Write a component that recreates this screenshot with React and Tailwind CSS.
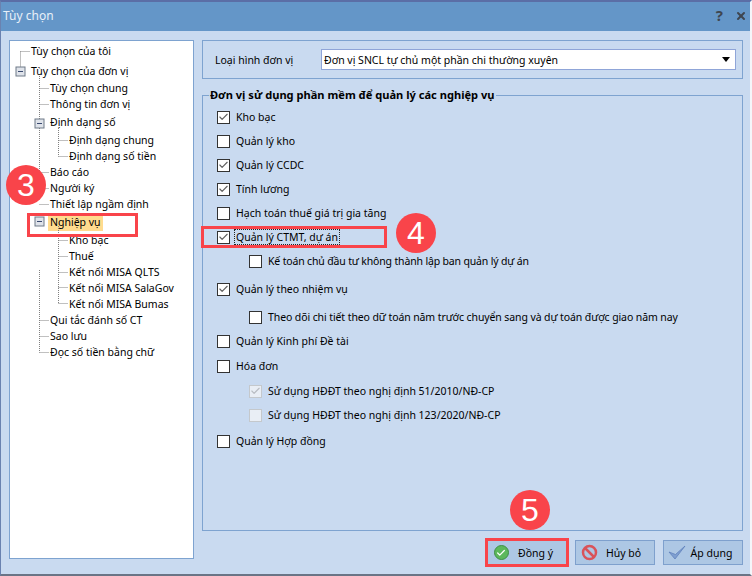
import { Check, X } from 'lucide-react'

// Cây tùy chọn bên trái: level quyết định thụt lề, gap là khoảng đệm phía trên dòng
const treeItems = [
  { label: 'Tùy chọn của tôi', indent: 'ml-[21px]', gap: 'mt-0' },
  { label: 'Tùy chọn của đơn vị', indent: 'ml-[21px]', gap: 'mt-[4px]' },
  { label: 'Tùy chọn chung', indent: 'ml-[40px]', gap: 'mt-[1px]' },
  { label: 'Thông tin đơn vị', indent: 'ml-[40px]', gap: 'mt-0' },
  { label: 'Định dạng số', indent: 'ml-[40px]', gap: 'mt-[2px]' },
  { label: 'Định dạng chung', indent: 'ml-[59px]', gap: 'mt-[2px]' },
  { label: 'Định dạng số tiền', indent: 'ml-[59px]', gap: 'mt-0' },
  { label: 'Báo cáo', indent: 'ml-[40px]', gap: 'mt-0' },
  { label: 'Người ký', indent: 'ml-[40px]', gap: 'mt-0' },
  { label: 'Thiết lập ngầm định', indent: 'ml-[40px]', gap: 'mt-0' },
  { label: 'Nghiệp vụ', indent: 'ml-[40px]', gap: 'mt-[2px]', selected: true },
  { label: 'Kho bạc', indent: 'ml-[59px]', gap: 'mt-[2px]' },
  { label: 'Thuế', indent: 'ml-[59px]', gap: 'mt-0' },
  { label: 'Kết nối MISA QLTS', indent: 'ml-[59px]', gap: 'mt-0' },
  { label: 'Kết nối MISA SalaGov', indent: 'ml-[59px]', gap: 'mt-0' },
  { label: 'Kết nối MISA Bumas', indent: 'ml-[59px]', gap: 'mt-0' },
  { label: 'Qui tắc đánh số CT', indent: 'ml-[40px]', gap: 'mt-0' },
  { label: 'Sao lưu', indent: 'ml-[40px]', gap: 'mt-0' },
  { label: 'Đọc số tiền bằng chữ', indent: 'ml-[40px]', gap: 'mt-0' },
]

// Danh sách nghiệp vụ ở khung bên phải
const options = [
  { label: 'Kho bạc', checked: true, gap: 'mt-0' },
  { label: 'Quản lý kho', gap: 'mt-[10px]' },
  { label: 'Quản lý CCDC', checked: true, gap: 'mt-[10px]' },
  { label: 'Tính lương', checked: true, gap: 'mt-[10px]' },
  { label: 'Hạch toán thuế giá trị gia tăng', gap: 'mt-[10px]' },
  { label: 'Quản lý CTMT, dự án', checked: true, gap: 'mt-[10px]', focused: true },
  { label: 'Kế toán chủ đầu tư không thành lập ban quản lý dự án', sub: true, gap: 'mt-[10px]', tracking: 'tracking-[-0.16px]' },
  { label: 'Quản lý theo nhiệm vụ', checked: true, gap: 'mt-[14px]' },
  { label: 'Theo dõi chi tiết theo dữ toán năm trước chuyển sang và dự toán được giao năm nay', sub: true, gap: 'mt-[14px]', tracking: 'tracking-[-0.1px]' },
  { label: 'Quản lý Kinh phí Đề tài', gap: 'mt-[10px]' },
  { label: 'Hóa đơn', gap: 'mt-[11px]' },
  { label: 'Sử dụng HĐĐT theo nghị định 51/2010/NĐ-CP', checked: true, sub: true, disabled: true, gap: 'mt-[11px]' },
  { label: 'Sử dụng HĐĐT theo nghị định 123/2020/NĐ-CP', sub: true, disabled: true, gap: 'mt-[10px]' },
  { label: 'Quản lý Hợp đồng', gap: 'mt-[12px]' },
]

// Nét chấm của cây và các ô thu gọn, vẽ đè lên khung cây
const TreeLines = () => (
  <svg className="absolute left-0 top-0 pointer-events-none" width="184" height="330" viewBox="0 0 184 330" fill="none">
    <g stroke="#808080" strokeDasharray="1 1">
      <path d="M10.5 10.5H20M10.5 10.5V26" />
      <path d="M29.5 35V155M29.5 47.5H39M29.5 63.5H39M29.5 131.5H39M29.5 147.5H39M29.5 163.5H39M29.5 229V311.5M29.5 279.5H39M29.5 295.5H39M29.5 311.5H39" />
      <path d="M48.5 87V115.5M48.5 99.5H58M48.5 115.5H58" />
      <path d="M48.5 185V262.5M48.5 199.5H58M48.5 215.5H58M48.5 231.5H58M48.5 246.5H58M48.5 262.5H58" />
    </g>
    <g>
      <rect x="6" y="26" width="9" height="9" fill="#dfe3ea" stroke="#6f7a88" />
      <path d="M8 30.5H13" stroke="#3a4a70" />
      <rect x="25" y="78" width="9" height="9" fill="#dfe3ea" stroke="#6f7a88" />
      <path d="M27 82.5H32" stroke="#3a4a70" />
      <rect x="25" y="176" width="9" height="9" fill="#dfe3ea" stroke="#6f7a88" />
      <path d="M27 180.5H32" stroke="#3a4a70" />
    </g>
  </svg>
)

const OptionRow = ({ item }) => (
  <div className={`flex items-center h-[14px] ${item.gap} ${item.sub ? 'ml-[32px]' : 'ml-0'}`}>
    <span
      className={`w-[13px] h-[13px] flex items-center justify-center border shrink-0 ${
        item.disabled ? 'border-[#c4c8cc] bg-[#e9eef5]' : 'border-[#333333] bg-white'
      }`}
    >
      {item.checked && (
        <Check size={12} strokeWidth={2.5} className={item.disabled ? 'text-[#b8bcc2]' : 'text-[#606060]'} />
      )}
    </span>
    <span className={`ml-[5px] px-[1px] whitespace-nowrap ${item.tracking || ''} ${item.focused ? 'outline outline-1 outline-dotted outline-[#222222]' : ''}`}>
      {item.label}
    </span>
  </div>
)

const DialogButton = ({ icon, label }) => (
  <button className="w-[80px] h-[25px] flex items-center border border-[#7ea0cd] bg-[#adc7e4] text-black pl-[4px]">
    <span className="w-[18px] h-[18px] flex items-center justify-center">{icon}</span>
    <span className="flex-1 text-center pr-[5px]">{label}</span>
  </button>
)

const Badge = ({ text, pos }) => (
  <div className={`absolute ${pos} w-[40px] h-[40px] rounded-full bg-[#f9444a] text-white flex items-center justify-center text-[32px] leading-none font-['Liberation_Sans',sans-serif]`}>
    {text}
  </div>
)

export default function App() {
  return (
    <div className="relative w-[752px] h-[576px] overflow-hidden bg-[#c9daf0] border-t-2 border-b-2 border-l border-r-2 border-t-[#5b6ea6] border-b-[#6a7486] border-l-[#6a82b0] border-r-[#f4f6fa] text-[10.5px] leading-[14px] text-black font-['Noto_Sans',sans-serif]">
      {/* Thanh tiêu đề */}
      <div className="h-[29px] bg-[#6496c8] flex items-center justify-between pl-[2px] pr-[3px] pb-[2px] text-[#e8f0f8] text-[12px]">
        <span>Tùy chọn</span>
        <div className="flex items-center gap-[12px] text-[#3f4650]">
          <span className="font-bold text-[15px] leading-none">?</span>
          <X size={12} strokeWidth={4} />
        </div>
      </div>

      <div className="flex pl-[8px] pr-[7px] pt-[9px] gap-[8px]">
        {/* Cây tùy chọn */}
        <div className="relative w-[185px] h-[519px] shrink-0 border border-[#7ea3d0] bg-white pt-[2px]">
          <TreeLines />
          {treeItems.map((item) => (
            <div key={item.label} className={`h-[16px] flex items-center whitespace-nowrap ${item.indent} ${item.gap}`}>
              <span className={item.selected ? 'bg-[#ffdb8e] px-[2px] -ml-[2px] h-[18px] flex items-center' : ''}>{item.label}</span>
            </div>
          ))}
        </div>

        <div className="flex-1 flex flex-col">
          {/* Loại hình đơn vị */}
          <div className="h-[39px] border border-[#7ea3d0] flex items-center pl-[12px] pr-[6px]">
            <span className="w-[106px] shrink-0">Loại hình đơn vị</span>
            <div className="flex-1 h-[21px] bg-white border border-[#8fa5d8] flex items-center justify-between pl-[2px] pr-[5px]">
              <span>Đơn vị SNCL tự chủ một phần chi thường xuyên</span>
              <span className="w-0 h-0 border-l-[4px] border-r-[4px] border-t-[5px] border-l-transparent border-r-transparent border-t-black" />
            </div>
          </div>

          {/* Khung nghiệp vụ */}
          <div className="relative mt-[16px] h-[436px] border border-[#7ea3d0] pl-[14px] pt-[14px]">
            <span className="absolute left-[6px] -top-[8px] bg-[#c9daf0] px-[1px] font-bold text-[11.1px]">
              Đơn vị sử dụng phần mềm để quản lý các nghiệp vụ
            </span>
            {options.map((item) => (
              <OptionRow key={item.label} item={item} />
            ))}
          </div>

          {/* Nút lệnh */}
          <div className="mt-[9px] flex justify-end gap-[8px]">
            <DialogButton
              label="Đồng ý"
              icon={
                <span className="w-[15px] h-[15px] rounded-full bg-[#5cb85c] border border-[#3f8f46] flex items-center justify-center">
                  <Check size={10} strokeWidth={3} className="text-white" />
                </span>
              }
            />
            <DialogButton
              label="Hủy bỏ"
              icon={
                <svg width="17" height="17" viewBox="0 0 17 17" fill="none">
                  <circle cx="8.5" cy="8.5" r="6.5" stroke="#d9535a" strokeWidth="2.5" />
                  <path d="M4 4L13 13" stroke="#d9535a" strokeWidth="2.5" />
                </svg>
              }
            />
            <DialogButton
              label="Áp dụng"
              icon={
                <svg width="18" height="18" viewBox="0 0 18 18" fill="none">
                  <path d="M1 8L7 15L17 2L7.5 10.5Z" fill="#7f9fd0" stroke="#5f82bd" strokeWidth="0.8" />
                </svg>
              }
            />
          </div>
        </div>
      </div>

      {/* Chú thích đỏ đè lên ảnh chụp */}
      <div className="absolute left-[26px] top-[211px] w-[111px] h-[24px] border-[3px] border-[#f9444a]" />
      <div className="absolute left-[200px] top-[224px] w-[186px] h-[22px] border-[3px] border-[#f9444a]" />
      <div className="absolute left-[484px] top-[536px] w-[84px] h-[29px] border-[3px] border-[#f9444a]" />
      <Badge text="3" pos="left-[5px] top-[163px]" />
      <Badge text="4" pos="left-[395px] top-[211px]" />
      <Badge text="5" pos="left-[509px] top-[488px]" />
    </div>
  )
}
